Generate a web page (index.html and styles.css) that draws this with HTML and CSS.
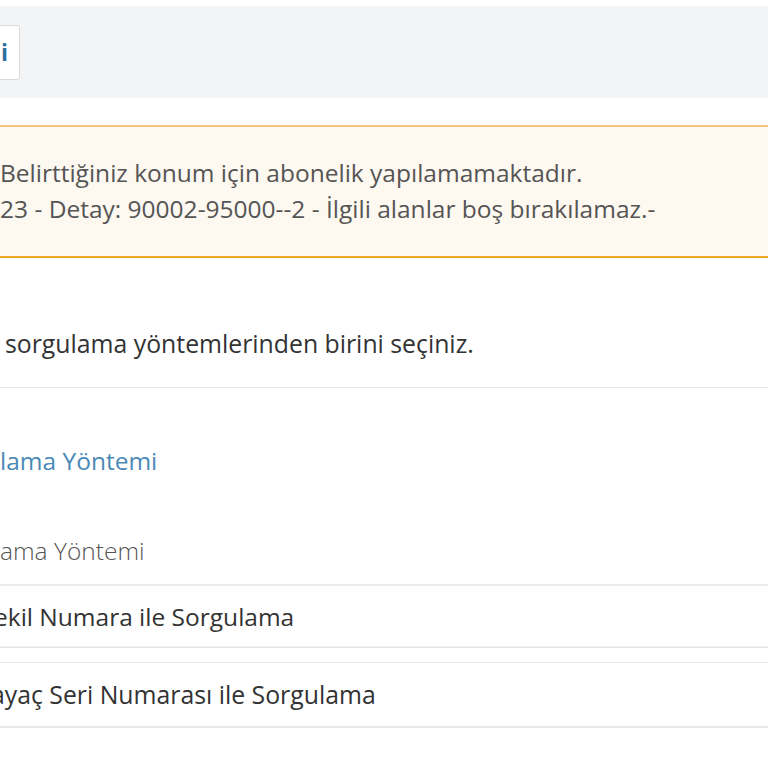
FILE: index.html
```html
<!DOCTYPE html>
<html lang="tr">
<head>
<meta charset="utf-8">
<title>Sorgulama</title>
<link rel="stylesheet" href="styles.css">
</head>
<body>
<div class="page">
  <div class="toolbar">
    <button class="btn" type="button">i</button>
  </div>

  <div class="alert">
    <p class="alert-line">Belirttiğiniz konum için abonelik yapılamamaktadır.</p>
    <p class="alert-line">23 - Detay: 90002-95000--2 - İlgili alanlar boş bırakılamaz.-</p>
  </div>

  <p class="instructions">sorgulama yöntemlerinden birini seçiniz.</p>

  <h3 class="section-title">lama Yöntemi</h3>

  <div class="methods">
    <div class="methods-header">ama Yöntemi</div>
    <div class="method method-first"><span class="method-label label-first">ekil Numara ile Sorgulama</span></div>
    <div class="method method-second"><span class="method-label label-second">ayaç Seri Numarası ile Sorgulama</span></div>
  </div>
</div>
</body>
</html>
```

FILE: styles.css
```css
html, body {
  margin: 0;
  padding: 0;
  background: #ffffff;
  overflow: hidden;
}

body {
  font-family: "Open Sans", "Noto Sans", sans-serif;
  font-size: 24.5px;
  line-height: 36px;
  color: #333333;
}

.page {
  padding-top: 6px;
}

.toolbar {
  background: #f3f4f6;
  height: 92px;
  padding-top: 19px;
  box-sizing: border-box;
}

.btn {
  display: block;
  margin: 0 0 0 -4px;
  height: 55px;
  padding: 0 11px 0 4px;
  border: 1px solid #d9dadc;
  border-radius: 3px;
  background: #ffffff;
  font-family: "Open Sans", "Noto Sans", sans-serif;
  font-size: 23px;
  font-weight: 700;
  line-height: 53px;
  color: #2f6f9e;
}

.alert {
  margin-top: 27px;
  background: #fdf8f0;
  border-top: 2px solid #f3c47a;
  border-bottom: 2px solid #efab25;
  padding: 28px 0 29px 0;
}

.alert-line {
  margin: 0;
  color: #555555;
}

.instructions {
  margin: 0;
  padding: 67px 0 26px 5px;
  font-size: 24.8px;
  border-bottom: 1px solid #e6e6e6;
  color: #333333;
}

.section-title {
  margin: 0;
  padding-top: 55px;
  font-size: 24.5px;
  font-weight: 400;
  line-height: 36px;
  color: #4b89b6;
}

.methods {
  padding-top: 54px;
}

.methods-header {
  font-weight: 300;
  color: #555555;
  padding-bottom: 15px;
  border-bottom: 2px solid #ececec;
}

.method {
  color: #333333;
  background: #ffffff;
  white-space: nowrap;
}

.method-label {
  display: inline-block;
}

.label-first {
  margin-left: -6px;
}

.label-second {
  margin-left: -9px;
  font-size: 24.8px;
}

.method-first {
  padding: 13px 0 12px 0;
  border-bottom: 1px solid #e2e2e2;
  box-shadow: inset 0 -7px 0 -6px #f2f2f2;
}

.method-second {
  margin-top: 14px;
  padding: 13px 0 13px 0;
  border-top: 1px solid #e6e6e6;
  border-bottom: 2px solid #e8e8e8;
}
```
